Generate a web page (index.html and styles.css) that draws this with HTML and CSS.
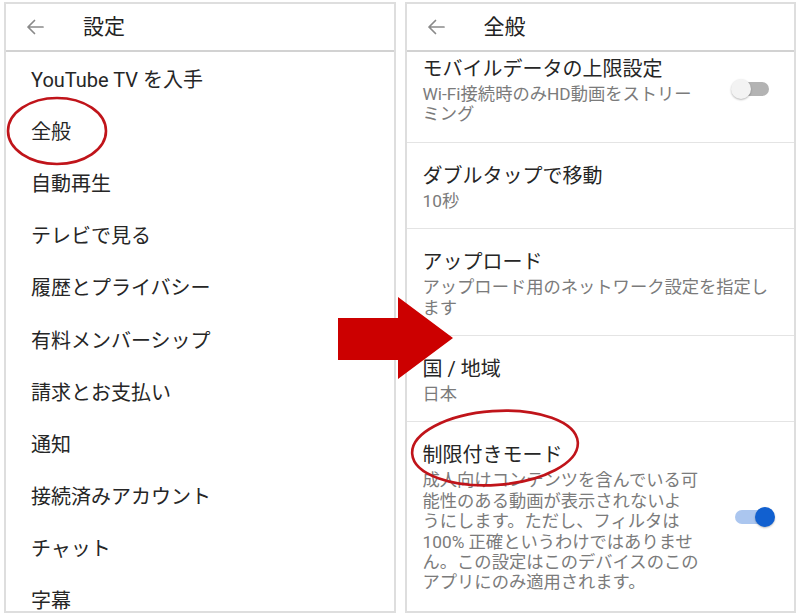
FILE: index.html
```
<!DOCTYPE html>
<html lang="ja">
<head>
<meta charset="utf-8">
<title>設定</title>
<link rel="stylesheet" href="styles.css">
</head>
<body>
<div class="stage">
  <section class="panel">
    <header class="bar">
      <svg class="back" viewBox="0 0 18 16" width="18" height="16"><path d="M17 8H2M8.5 1.5L2 8l6.5 6.5" fill="none" stroke="#8a8a8a" stroke-width="1.7" stroke-linecap="round" stroke-linejoin="round"/></svg>
      <h1 class="bar-title">設定</h1>
    </header>
    <ul class="menu">
      <li>YouTube TV を入手</li>
      <li>全般</li>
      <li>自動再生</li>
      <li>テレビで見る</li>
      <li>履歴とプライバシー</li>
      <li>有料メンバーシップ</li>
      <li>請求とお支払い</li>
      <li>通知</li>
      <li>接続済みアカウント</li>
      <li>チャット</li>
      <li>字幕</li>
    </ul>
  </section>
  <section class="panel">
    <header class="bar">
      <svg class="back" viewBox="0 0 18 16" width="18" height="16"><path d="M17 8H2M8.5 1.5L2 8l6.5 6.5" fill="none" stroke="#8a8a8a" stroke-width="1.7" stroke-linecap="round" stroke-linejoin="round"/></svg>
      <h1 class="bar-title">全般</h1>
    </header>
    <div class="viewport">
      <div class="settings">
        <div class="setting">
          <div class="setting-text">
            <div class="setting-title">モバイルデータの上限設定</div>
            <div class="setting-sub">Wi-Fi接続時のみHD動画をストリー<br>ミング</div>
          </div>
          <span class="switch"><span class="track"></span><span class="thumb"></span></span>
        </div>
        <div class="setting">
          <div class="setting-text">
            <div class="setting-title">ダブルタップで移動</div>
            <div class="setting-sub">10秒</div>
          </div>
        </div>
        <div class="setting">
          <div class="setting-text">
            <div class="setting-title">アップロード</div>
            <div class="setting-sub">アップロード用のネットワーク設定を指定し<br>ます</div>
          </div>
        </div>
        <div class="setting">
          <div class="setting-text">
            <div class="setting-title">国 / 地域</div>
            <div class="setting-sub">日本</div>
          </div>
        </div>
        <div class="setting">
          <div class="setting-text">
            <div class="setting-title">制限付きモード</div>
            <div class="setting-sub">成人向けコンテンツを含んでいる可<br>能性のある動画が表示されないよ<br>うにします。ただし、フィルタは<br>100% 正確というわけではありませ<br>ん。この設定はこのデバイスのこの<br>アプリにのみ適用されます。</div>
          </div>
          <span class="switch on"><span class="track"></span><span class="thumb"></span></span>
        </div>
      </div>
    </div>
  </section>
</div>
<svg class="marks" viewBox="0 0 800 616" width="800" height="616">
  <ellipse cx="57" cy="131" rx="49" ry="33" fill="none" stroke="#c0141a" stroke-width="2.6"/>
  <ellipse cx="495" cy="448" rx="83" ry="37" fill="none" stroke="#c0141a" stroke-width="2.6" transform="rotate(-4 495 448)"/>
  <polygon points="338,318 398,318 398,297 453,338 398,379 398,360 338,360" fill="#cc0000"/>
</svg>
</body>
</html>
```
FILE: styles.css
```
html, body {
  margin: 0;
  padding: 0;
  background: #ffffff;
}

body {
  width: 800px;
  height: 616px;
  overflow: hidden;
  position: relative;
  font-family: Roboto, "Noto Sans CJK JP", sans-serif;
  color: #262626;
}

.stage {
  display: flex;
  gap: 9px;
  padding: 2px 4px 0 4px;
}

.panel {
  width: 392px;
  height: 611px;
  box-sizing: border-box;
  border: 2px solid #dedede;
  display: flex;
  flex-direction: column;
  overflow: hidden;
  background: #ffffff;
}

.bar {
  flex: none;
  height: 46px;
  border-bottom: 2px solid #d2d2d2;
  display: flex;
  align-items: center;
  padding-left: 20px;
  gap: 39px;
}

.back {
  display: block;
  flex: none;
}

.bar-title {
  margin: 0;
  font-size: 21px;
  font-weight: 400;
  line-height: 26px;
  color: #222222;
}

.menu {
  list-style: none;
  margin: 0;
  padding: 0;
}

.menu li {
  height: 52.2px;
  display: flex;
  align-items: center;
  padding-left: 25px;
  font-size: 20px;
  color: #262626;
}

.viewport {
  flex: 1;
  overflow: hidden;
}

.settings {
  margin-top: -16px;
}

.setting {
  display: flex;
  align-items: center;
  gap: 25px;
  padding: 18px 19px 17px 16px;
  border-bottom: 1px solid #e4e4e4;
}

.setting:last-child {
  border-bottom: none;
}

.setting-text {
  flex: 1;
  min-width: 0;
}

.setting-title {
  font-size: 20px;
  line-height: 30px;
  color: #262626;
}

.setting-sub {
  font-size: 17.3px;
  line-height: 20.4px;
  color: #7b7b7b;
}

.switch {
  flex: none;
  width: 44px;
  height: 20px;
  position: relative;
}

.switch .track {
  position: absolute;
  left: 4px;
  top: 3px;
  width: 34px;
  height: 14px;
  border-radius: 7px;
  background: #b3b3b3;
}

.switch .thumb {
  position: absolute;
  left: 0;
  top: 0;
  width: 20px;
  height: 20px;
  border-radius: 50%;
  background: #f3f3f3;
  box-shadow: 0 1px 2px rgba(0, 0, 0, 0.28);
}

.switch.on .track {
  background: #abc6ef;
}

.switch.on .thumb {
  left: 24px;
  background: #1160d0;
  box-shadow: 0 1px 2px rgba(0, 0, 0, 0.25);
}

.marks {
  position: absolute;
  left: 0;
  top: 0;
  pointer-events: none;
}
```
